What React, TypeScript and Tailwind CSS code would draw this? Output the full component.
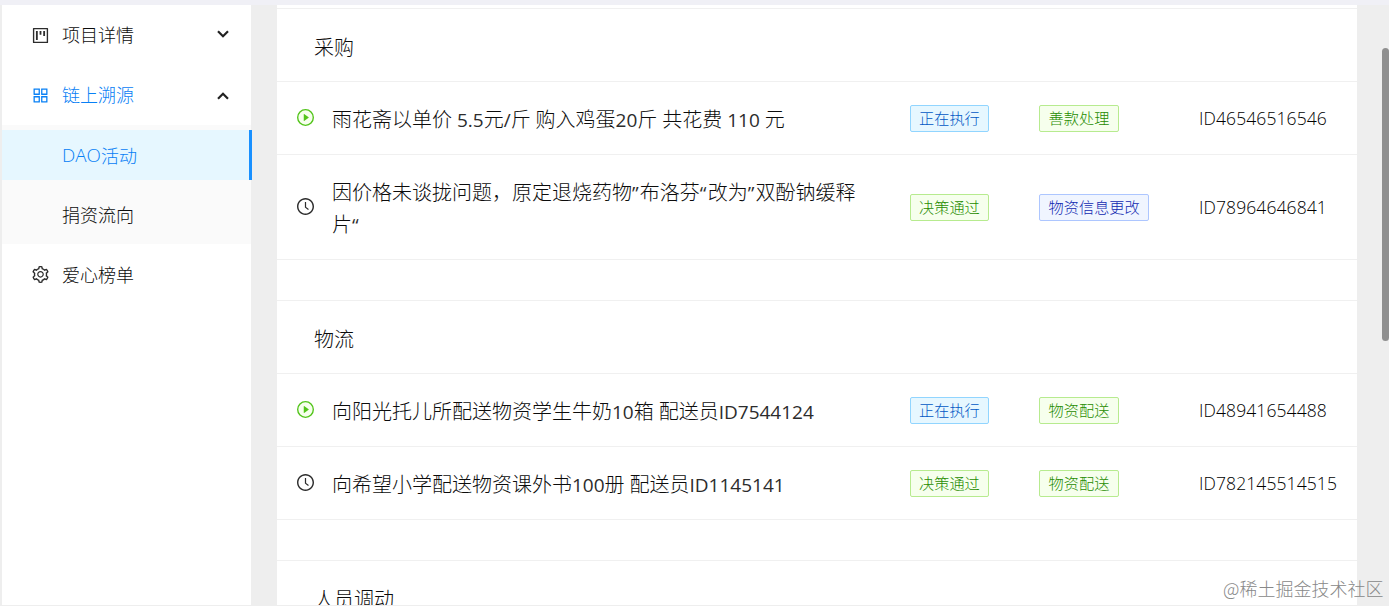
import type { ReactNode } from "react";
import {
  AiOutlineAppstore,
  AiOutlineClockCircle,
  AiOutlineProject,
  AiOutlineSetting,
} from "react-icons/ai";

type Tone = "blue" | "green" | "geekblue";
type Status = "running" | "waiting";

interface Activity {
  status: Status;
  title: string;
  stage: [string, Tone];
  kind: [string, Tone];
  id: string;
}

const ICON_BOX = "64 64 896 896";

const tones: Record<Tone, string> = {
  blue: "border-[#91d5ff] bg-[#e6f7ff] text-[#0058c4]",
  green: "border-[#b7eb8f] bg-[#f6ffed] text-[#268c00]",
  geekblue: "border-[#adc6ff] bg-[#f0f5ff] text-[#0f28b0]",
};

const purchases: Activity[] = [
  {
    status: "running",
    title: "雨花斋以单价 5.5元/斤 购入鸡蛋20斤 共花费 110 元",
    stage: ["正在执行", "blue"],
    kind: ["善款处理", "green"],
    id: "ID46546516546",
  },
  {
    status: "waiting",
    title: "因价格未谈拢问题，原定退烧药物”布洛芬“改为”双酚钠缓释片“",
    stage: ["决策通过", "green"],
    kind: ["物资信息更改", "geekblue"],
    id: "ID78964646841",
  },
];

const logistics: Activity[] = [
  {
    status: "running",
    title: "向阳光托儿所配送物资学生牛奶10箱 配送员ID7544124",
    stage: ["正在执行", "blue"],
    kind: ["物资配送", "green"],
    id: "ID48941654488",
  },
  {
    status: "waiting",
    title: "向希望小学配送物资课外书100册 配送员ID1145141",
    stage: ["决策通过", "green"],
    kind: ["物资配送", "green"],
    id: "ID782145514515",
  },
];

function Mixed({ text }: { text: string }) {
  return (
    <>
      {text.split(/([ -~]+|[“”])/).map((part, i) =>
        i % 2 ? (
          <span
            key={i}
            className={`font-['Open_Sans'] text-[19px] leading-none font-normal text-[#2c2c2c] ${
              /[“”]/.test(part) ? "tracking-[1.2px]" : ""
            }`}
          >
            {part}
          </span>
        ) : (
          part
        ),
      )}
    </>
  );
}

function PlayIcon() {
  return (
    <svg viewBox={ICON_BOX} className="size-[17px]">
      <circle cx="512" cy="512" r="412" fill="#f6ffed" stroke="#52c41a" strokeWidth="72" />
      <path
        fill="#52c41a"
        d="M719.4 499.1l-296.1-215A15.9 15.9 0 0 0 398 297v430c0 13.1 14.8 20.5 25.3 12.9l296.1-215a15.9 15.9 0 0 0 0-25.8z"
        transform="translate(102 102) scale(.8)"
      />
    </svg>
  );
}

function Tag({ value }: { value: [string, Tone] }) {
  return (
    <span
      className={`inline-flex h-[27px] items-center rounded-[2px] border px-2 pb-px text-[15.2px] leading-none whitespace-nowrap ${tones[value[1]]}`}
    >
      {value[0]}
    </span>
  );
}

function Row({ item }: { item: Activity }) {
  return (
    <div className="grid grid-cols-[55px_578px_129px_160px_1fr] items-center border-b border-[#f0f0f0]">
      <span className="flex items-center pb-[2px] pl-5 text-[17px] text-[#2c2c2c]">
        {item.status === "running" ? <PlayIcon /> : <AiOutlineClockCircle viewBox={ICON_BOX} />}
      </span>
      <p className="w-[532px] pt-[21px] pb-[19px] text-[20px] leading-[32px]">
        <Mixed text={item.title} />
      </p>
      <span className="flex">
        <Tag value={item.stage} />
      </span>
      <span className="flex [&>span]:px-[8.6px]">
        <Tag value={item.kind} />
      </span>
      <span className="font-['Open_Sans'] text-[17.5px] leading-6 font-light tracking-[0.1px] text-black">
        {item.id}
      </span>
    </div>
  );
}

function Section({ title, children }: { title: string; children?: ReactNode }) {
  return (
    <section className="border-t border-[#f0f0f0]">
      <h2 className="flex h-[73px] items-center border-b border-[#f0f0f0] pt-[3px] pl-[37px] text-[20px] font-light">
        {title}
      </h2>
      {children}
      <div className="h-[40px]" />
    </section>
  );
}

function Chevron({ up }: { up?: boolean }) {
  return (
    <svg
      viewBox="0 0 12 8"
      className={`mr-[22px] ml-auto h-2 w-3 ${up ? "mt-px rotate-180" : "mt-[-2px]"}`}
      fill="none"
      stroke="#222"
      strokeWidth="2.2"
    >
      <path d="M1 1.2 6 6.2 11 1.2" />
    </svg>
  );
}

export default function App() {
  return (
    <div className="flex h-[606px] w-[1389px] overflow-hidden border-t-[5px] border-[#f0f0f6] bg-[#eeeeee] font-['Noto_Sans_CJK_SC',sans-serif] font-light text-[#0c0c0c]">
      <aside className="ml-[2px] h-[600px] w-[249px] shrink-0 bg-white text-[18px]">
        <div className="flex h-[60px] items-center pl-[30px]">
          <AiOutlineProject viewBox={ICON_BOX} className="size-[17px] text-[#2c2c2c]" />
          <span className="mt-[-1px] ml-[13px]">项目详情</span>
          <Chevron />
        </div>
        <div className="flex h-[60px] items-center pl-[30px] text-[#0880f5]">
          <AiOutlineAppstore viewBox={ICON_BOX} className="size-[17px]" />
          <span className="mt-[-1px] ml-[13px]">链上溯源</span>
          <Chevron up />
        </div>
        <div className="bg-[#fafafa] pt-[5px] pb-[4px]">
          <div className="mr-[-1px] flex h-[50px] items-center border-r-[3px] border-[#1890ff] bg-[#e6f7ff] pl-[60px] text-[#0880f5]">
            <span className="font-['Open_Sans'] text-[18.8px]">DAO</span>活动
          </div>
          <div className="mt-[10px] flex h-[50px] items-center pb-[2px] pl-[60px]">捐资流向</div>
        </div>
        <div className="flex h-[60px] items-center pl-[30px]">
          <AiOutlineSetting viewBox={ICON_BOX} className="size-[17px] text-[#2c2c2c]" />
          <span className="ml-[13px]">爱心榜单</span>
        </div>
      </aside>
      <main className="ml-[26px] h-[600px] w-[1080px] shrink-0 overflow-hidden bg-white pt-[3px]">
        <Section title="采购">
          {purchases.map((item) => (
            <Row key={item.id} item={item} />
          ))}
        </Section>
        <Section title="物流">
          {logistics.map((item) => (
            <Row key={item.id} item={item} />
          ))}
        </Section>
        <Section title="人员调动" />
      </main>
      <div className="mt-[43px] ml-auto h-[293px] w-[7px] rounded-full bg-[#8f8f8f]" />
      <div className="absolute top-[576px] left-[1223px] text-[18px] leading-6 whitespace-nowrap text-[#888]">
        @稀土掘金技术社区
      </div>
    </div>
  );
}
